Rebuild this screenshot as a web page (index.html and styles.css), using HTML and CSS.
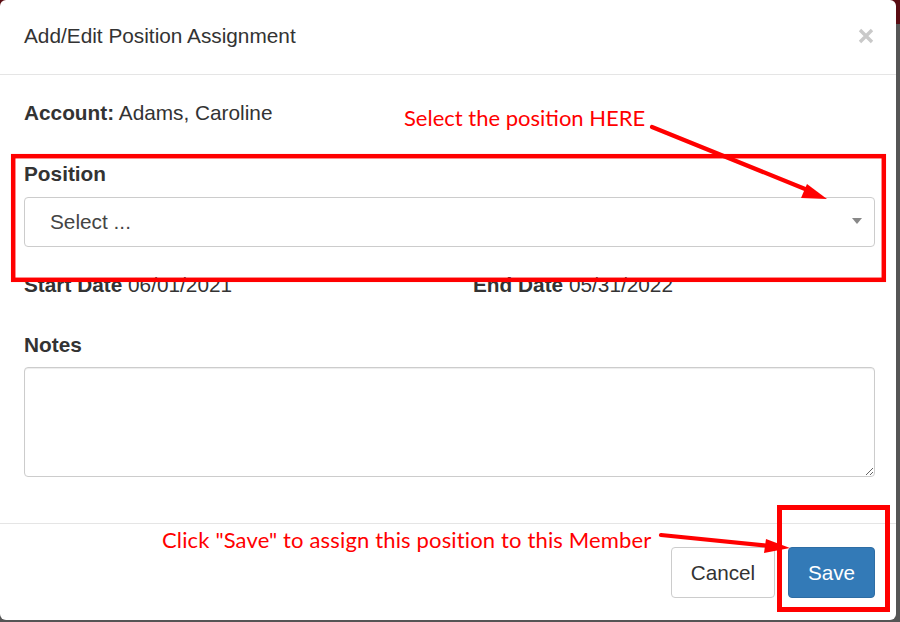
FILE: index.html
```html
<!DOCTYPE html>
<html>
<head>
<meta charset="utf-8">
<link rel="stylesheet" href="styles.css">
</head>
<body>
<div class="modal">
  <div class="modal-header">
    <h4 class="title">Add/Edit Position Assignment</h4>
    <button class="close" aria-label="Close">
      <svg width="16" height="16" viewBox="0 0 16 16"><path d="M2 2 L14 14 M14 2 L2 14" stroke="#c9c9c9" stroke-width="3.4" stroke-linecap="butt"/></svg>
    </button>
  </div>
  <div class="modal-body">
    <p class="account"><b>Account:</b> Adams, Caroline</p>
    <div class="group position-group">
      <label class="label">Position</label>
      <div class="select"><span>Select ...</span><span class="caret"></span></div>
    </div>
    <div class="dates">
      <div><b>Start Date</b> 06/01/2021</div>
      <div><b>End Date</b> 05/31/2022</div>
    </div>
    <div class="group notes-group">
      <label class="label">Notes</label>
      <textarea class="notes"></textarea>
    </div>
  </div>
  <div class="modal-footer">
    <button class="btn btn-default">Cancel</button>
    <button class="btn btn-primary">Save</button>
  </div>

  <svg class="annot" width="900" height="622" viewBox="0 0 900 622">
    <rect x="13.2" y="156.2" width="870.6" height="123.6" fill="none" stroke="#ff0000" stroke-width="4.5"/>
    <rect x="779.5" y="507.5" width="108" height="102" fill="none" stroke="#ff0000" stroke-width="5"/>
    <line x1="652" y1="127" x2="810" y2="191" stroke="#ff0000" stroke-width="4.2" stroke-linecap="round"/>
    <polygon points="827,199 807,184 801,198" fill="#ff0000"/>
    <line x1="661" y1="535" x2="770" y2="546" stroke="#ff0000" stroke-width="4.2" stroke-linecap="round"/>
    <polygon points="790,548 766,539 764,553" fill="#ff0000"/>
  </svg>
  <div class="note note-select">Select the position HERE</div>
  <div class="note note-save">Click "Save" to assign this position to this Member</div>
</div>
</body>
</html>
```

FILE: styles.css
```css
html, body {
  margin: 0;
  padding: 0;
}
body {
  width: 900px;
  height: 622px;
  overflow: hidden;
  background: linear-gradient(180deg, #5a0c12 0, #5a0c12 24px, #555 24px, #555 100%);
  font-family: "Liberation Sans", Arial, sans-serif;
  color: #333;
}
.modal {
  position: relative;
  width: 896px;
  height: 620px;
  background: #fff;
  border-radius: 6px;
  display: flex;
  flex-direction: column;
  box-sizing: border-box;
}
.modal-header {
  height: 75px;
  box-sizing: border-box;
  border-bottom: 1px solid #e5e5e5;
  display: flex;
  align-items: center;
  justify-content: space-between;
  padding: 0 22px 2px 24px;
}
.title {
  margin: 0;
  font-size: 20.8px;
  font-weight: normal;
  line-height: 26px;
  color: #333;
}
.close {
  border: 0;
  background: none;
  padding: 0;
  margin: 0;
  width: 16px;
  height: 16px;
  display: flex;
}
.modal-body {
  padding: 25px 21px 0 24px;
  height: 448px;
  box-sizing: border-box;
  font-size: 20.8px;
  line-height: 26px;
}
.account {
  margin: 0;
}
.group {
  display: flex;
  flex-direction: column;
}
.position-group {
  margin-top: 35px;
}
.label {
  font-weight: bold;
  line-height: 26px;
  margin-bottom: 10px;
}
.select {
  height: 50px;
  box-sizing: border-box;
  border: 1px solid #ccc;
  border-radius: 4px;
  display: flex;
  align-items: center;
  justify-content: space-between;
  padding: 0 12px 0 25px;
  color: #444;
}
.caret {
  width: 0;
  height: 0;
  border-left: 5px solid transparent;
  border-right: 5px solid transparent;
  border-top: 6px solid #888;
  margin-top: -2px;
}
.dates {
  display: grid;
  grid-template-columns: 449px 1fr;
  margin-top: 25px;
}
.notes-group {
  margin-top: 34px;
}
.notes-group .label {
  margin-bottom: 9px;
}
.notes {
  height: 110px;
  box-sizing: border-box;
  border: 1px solid #ccc;
  border-radius: 4px;
  box-shadow: inset 0 1px 1px rgba(0,0,0,.075);
  resize: vertical;
  font: inherit;
  margin: 0;
}
.modal-footer {
  border-top: 1px solid #e5e5e5;
  display: flex;
  justify-content: flex-end;
  align-items: flex-start;
  gap: 13px;
  padding: 23px 21px 0 24px;
  flex: 1;
}
.btn {
  height: 51px;
  box-sizing: border-box;
  border-radius: 4px;
  font-family: "Liberation Sans", Arial, sans-serif;
  font-size: 20.7px;
  padding: 0;
  cursor: pointer;
}
.btn-default {
  background: #fff;
  border: 1px solid #ccc;
  color: #333;
  width: 104px;
}
.btn-primary {
  background: #337ab7;
  border: 1px solid #2e6da4;
  color: #fff;
  width: 87px;
}
.annot {
  position: absolute;
  left: 0;
  top: 0;
  pointer-events: none;
}
.note {
  position: absolute;
  color: #ff0000;
  font-family: Lato, "Open Sans", sans-serif;
  font-size: 22px;
  line-height: 24px;
  white-space: nowrap;
}
.note-select {
  left: 404px;
  top: 106px;
}
.note-save {
  left: 162px;
  top: 528px;
  letter-spacing: 0.15px;
}
```
